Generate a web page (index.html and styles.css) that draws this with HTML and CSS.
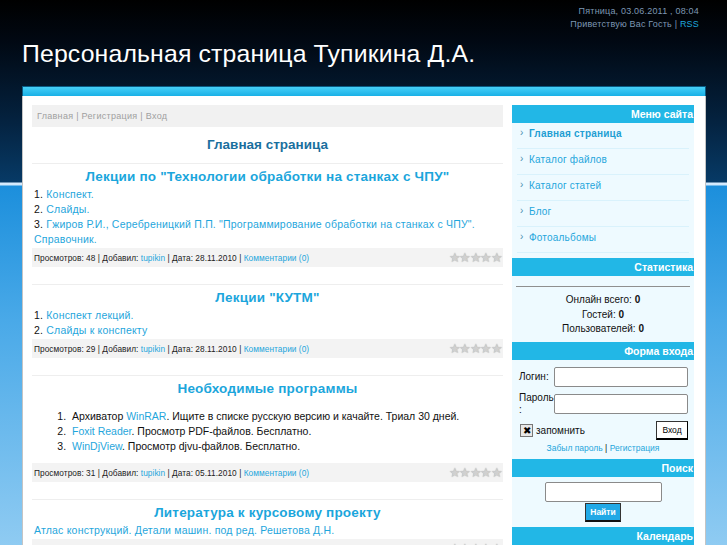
FILE: index.html
```html
<!DOCTYPE html>
<html>
<head>
  <title>Персональная страница Тупикина Д.А.</title>
  <link rel="stylesheet" href="styles.css">
</head>
<body>
  <div class="page">
    <div class="header">
      <div class="topinfo">
        <div>Пятница, 03.06.2011 , 08:04</div>
        <div>Приветствую Вас Гость | <a href="#">RSS</a></div>
      </div>
      <h1 class="sitename">Персональная страница Тупикина Д.А.</h1>
    </div>

    <div class="container">
      <div class="topbar"></div>
      <div class="inner">
        <div class="content">
          <div class="navbar">Главная | Регистрация | Вход</div>
          <h2 class="pagetitle">Главная страница</h2>

          <div class="entry">
            <div class="entry-title">Лекции по "Технологии обработки на станках с ЧПУ"</div>
            <div class="entry-text">
              1. <a href="#">Конспект.</a><br>
              2. <a href="#">Слайды.</a><br>
              3. <a href="#">Гжиров Р.И., Серебреницкий П.П. "Программирование обработки на станках с ЧПУ". Справочник.</a>
            </div>
            <div class="details">
              <span>Просмотров: 48 | Добавил: <a href="#">tupikin</a> | Дата: 28.11.2010 | <a href="#">Комментарии (0)</a></span>
              <span class="stars">★★★★★</span>
            </div>
          </div>

          <div class="entry">
            <div class="entry-title">Лекции "КУТМ"</div>
            <div class="entry-text">
              1. <a href="#">Конспект лекций.</a><br>
              2. <a href="#">Слайды к конспекту</a>
            </div>
            <div class="details">
              <span>Просмотров: 29 | Добавил: <a href="#">tupikin</a> | Дата: 28.11.2010 | <a href="#">Комментарии (0)</a></span>
              <span class="stars">★★★★★</span>
            </div>
          </div>

          <div class="entry">
            <div class="entry-title">Необходимые программы</div>
            <ol class="entry-list">
              <li>Архиватор <a href="#">WinRAR</a>. Ищите в списке русскую версию и качайте. Триал 30 дней.</li>
              <li><a href="#">Foxit Reader</a>. Просмотр PDF-файлов. Бесплатно.</li>
              <li><a href="#">WinDjView</a>. Просмотр djvu-файлов. Бесплатно.</li>
            </ol>
            <div class="details">
              <span>Просмотров: 31 | Добавил: <a href="#">tupikin</a> | Дата: 05.11.2010 | <a href="#">Комментарии (0)</a></span>
              <span class="stars">★★★★★</span>
            </div>
          </div>

          <div class="entry">
            <div class="entry-title">Литература к курсовому проекту</div>
            <div class="entry-text">
              <a href="#">Атлас конструкций. Детали машин. под ред. Решетова Д.Н.</a>
            </div>
            <div class="details">
              <span>Просмотров: 40 | Добавил: <a href="#">tupikin</a> | Дата: 01.11.2010 | <a href="#">Комментарии (0)</a></span>
              <span class="stars">★★★★★</span>
            </div>
          </div>
        </div>

        <div class="sidebar">
          <div class="block-title">Меню сайта</div>
          <ul class="menu">
            <li class="active"><a href="#">Главная страница</a></li>
            <li><a href="#">Каталог файлов</a></li>
            <li><a href="#">Каталог статей</a></li>
            <li><a href="#">Блог</a></li>
            <li><a href="#">Фотоальбомы</a></li>
          </ul>

          <div class="block-title">Статистика</div>
          <div class="block-body stats">
            <hr>
            <div>Онлайн всего: <b>0</b></div>
            <div>Гостей: <b>0</b></div>
            <div>Пользователей: <b>0</b></div>
          </div>

          <div class="block-title">Форма входа</div>
          <div class="block-body login">
            <div class="login-row">
              <span class="login-label">Логин:</span>
              <input type="text" class="field">
            </div>
            <div class="login-row">
              <span class="login-label">Пароль<wbr>:</span>
              <input type="password" class="field">
            </div>
            <div class="remember-row">
              <label class="remember"><span class="checkbox">✖</span> запомнить</label>
              <button class="btn-enter">Вход</button>
            </div>
            <div class="login-links"><a href="#">Забыл пароль</a> | <a href="#">Регистрация</a></div>
          </div>

          <div class="block-title">Поиск</div>
          <div class="block-body search">
            <input type="text" class="search-field">
            <button class="btn-search">Найти</button>
          </div>

          <div class="block-title">Календарь</div>
        </div>
      </div>
    </div>
  </div>
</body>
</html>
```

FILE: styles.css
```css
body {
  margin: 0;
  font-family: "Liberation Sans", Arial, sans-serif;
  background: #8fcbf2;
}

.page {
  height: 545px;
  overflow: hidden;
  background: linear-gradient(to bottom, #000000 0, #010812 40px, #04223f 120px, #073a66 182px, #d8ecff 183px, #cfe7fb 185px, #1c8fdc 186px, #49a9e8 320px, #8fcbf2 545px);
}

a {
  color: #1fa6dc;
  text-decoration: none;
}

.header {
  height: 86px;
  position: relative;
}

.topinfo {
  position: absolute;
  right: 28px;
  top: 5px;
  text-align: right;
  font-size: 9px;
  line-height: 13px;
  color: #7d97b3;
  letter-spacing: 0.2px;
}

.sitename {
  margin: 0;
  padding: 40px 0 0 22px;
  font-weight: normal;
  font-size: 24.8px;
  color: #ffffff;
  letter-spacing: 0.15px;
}

.container {
  margin: 0 21px 0 22px;
}

.topbar {
  height: 9px;
  background: linear-gradient(to bottom, #46d0f8, #19b0e6);
  border: 1px solid #0a5b84;
  border-bottom: none;
}

.inner {
  background: #ffffff;
  border-left: 1px solid #c4c4c4;
  border-right: 1px solid #c4c4c4;
  display: flex;
  gap: 9px;
  padding: 9px 11px 0 9px;
  height: 460px;
}

.content {
  width: 471px;
}

.navbar {
  background: #f1f1f1;
  height: 22px;
  line-height: 22px;
  padding-left: 5px;
  font-size: 9px;
  color: #a0a0a0;
  letter-spacing: 0.3px;
}

.pagetitle {
  margin: 0;
  padding: 10px 0 11px;
  text-align: center;
  font-size: 13.5px;
  color: #1a6f9e;
  border-bottom: 1px solid #eeeeee;
}

.entry {
  border-bottom: 1px solid #eeeeee;
  padding: 4px 0 17px;
}

.entry-title {
  text-align: center;
  font-weight: bold;
  font-size: 13.5px;
  color: #1ba6dc;
  line-height: 18px;
  letter-spacing: 0.2px;
}

.entry-text {
  padding: 1px 2px 1px;
  font-size: 10.5px;
  line-height: 15px;
  color: #111111;
  letter-spacing: 0.2px;
}

.entry-list {
  margin: 0;
  padding: 11px 0 9px 37px;
  font-size: 10.5px;
  line-height: 15px;
  color: #111111;
}

.entry-list li {
  padding-left: 3px;
}

.details {
  display: flex;
  justify-content: space-between;
  align-items: center;
  background: #f3f3f3;
  height: 19px;
  padding: 0 2px;
  font-size: 8.3px;
  color: #222222;
  letter-spacing: 0.05px;
}

.stars {
  color: #d0d0d0;
  font-size: 13px;
  letter-spacing: -1.5px;
  text-shadow: 0 0 1px #999999;
}

.sidebar {
  width: 182px;
  background: #eefaff;
  font-size: 10px;
}

.block-title {
  background: #22b7e6;
  color: #ffffff;
  font-weight: bold;
  font-size: 10.5px;
  text-align: right;
  height: 18px;
  line-height: 18px;
  padding-right: 1px;
}

.menu {
  list-style: none;
  margin: 0;
  padding: 0 5px 5px 5px;
}

.menu li {
  height: 25px;
  line-height: 22px;
  border-bottom: 1px solid #d9f2fc;
  padding-left: 12px;
  position: relative;
  font-size: 10px;
  letter-spacing: 0.2px;
}

.menu li::before {
  content: "›";
  position: absolute;
  left: 3px;
  top: -1px;
  color: #4a8fb0;
  font-size: 10px;
}

.menu li.active a {
  font-weight: bold;
  color: #1f9fd3;
}

.stats {
  padding: 7px 4px 5px;
  text-align: center;
  color: #111111;
  line-height: 14.5px;
}

.stats hr {
  border: none;
  border-top: 1px solid #8f8f8f;
  margin: 3px 0 6px;
}

.login {
  padding: 7px 6px 6px;
  color: #111111;
}

.login-row {
  display: flex;
  align-items: center;
  gap: 3px;
  margin-bottom: 5px;
}

.login-label {
  width: 32px;
  padding-left: 1px;
  line-height: 12px;
}

.field {
  box-sizing: border-box;
  width: 134px;
  height: 20px;
  border: 1px solid #8a8a8a;
  border-radius: 2px;
  padding: 0 2px;
  margin: 0;
}

.remember-row {
  display: flex;
  justify-content: space-between;
  align-items: center;
  padding-left: 2px;
}

.remember {
  display: flex;
  align-items: center;
  gap: 3px;
}

.checkbox {
  display: inline-block;
  width: 11px;
  height: 11px;
  border: 1px solid #777777;
  background: #e8e8e8;
  font-size: 10px;
  line-height: 11px;
  text-align: center;
  color: #000000;
}

.btn-enter {
  font-family: "Liberation Sans", Arial, sans-serif;
  font-size: 8.5px;
  width: 32px;
  height: 19px;
  padding: 0;
  background: #ffffff;
  border: 1px solid #333333;
  border-right-color: #000000;
  border-bottom: 2px solid #000000;
}

.login-links {
  text-align: center;
  font-size: 8.5px;
  padding-top: 3px;
}

.search {
  padding: 5px 0 5px;
  display: flex;
  flex-direction: column;
  align-items: center;
  gap: 1px;
}

.search-field {
  box-sizing: border-box;
  width: 117px;
  height: 20px;
  border: 1px solid #8a8a8a;
  border-radius: 2px;
  margin: 0;
  padding: 0 2px;
}

.btn-search {
  font-family: "Liberation Sans", Arial, sans-serif;
  font-size: 8.5px;
  font-weight: bold;
  color: #ffffff;
  background: #22a9e6;
  border: 1px solid #333333;
  border-bottom: 2px solid #111111;
  height: 19px;
  width: 36px;
  padding: 0;
}
```
